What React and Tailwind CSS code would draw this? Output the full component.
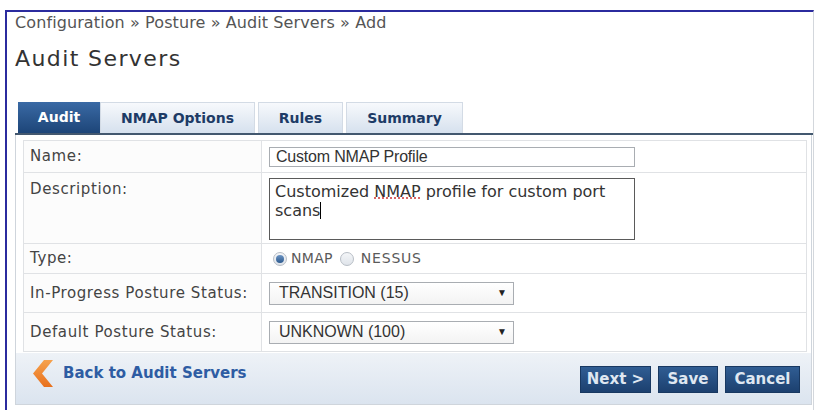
import React from 'react';

// small css radio, drawn like the old browser widget
const Radio = ({ checked }) => (
  <span className="inline-flex w-[14px] h-[14px] rounded-full border border-[#b8bec6] bg-gradient-to-b from-[#f4f6f8] to-[#dfe4ea] items-center justify-center">
    {checked && <span className="w-[8px] h-[8px] rounded-full bg-gradient-to-b from-[#6d95c4] to-[#2c5a8e]" />}
  </span>
);

const Chevron = () => (
  <svg width="21" height="27" viewBox="0 0 21 27">
    <defs>
      <linearGradient id="chev" x1="0" y1="0" x2="0" y2="1">
        <stop offset="0" stopColor="#f6a24e" />
        <stop offset="1" stopColor="#e8701c" />
      </linearGradient>
    </defs>
    <polygon points="12,0 21,0 10,13.5 21,27 12,27 1,13.5" fill="url(#chev)" />
  </svg>
);

const Select = ({ value }) => (
  <div className="w-[245px] h-[23px] border border-[#a9adb2] bg-gradient-to-b from-white to-[#f3f3f3] flex items-center justify-between pl-[9px] pr-[6px] font-['Liberation_Sans',Arial,sans-serif] text-[16px] text-[#333]">
    <span>{value}</span>
    <span className="text-[10px] text-[#222] leading-none">▼</span>
  </div>
);

const TABS = [
  { label: 'Audit', w: 'w-[82px]', active: true },
  { label: 'NMAP Options', w: 'w-[155px]' },
  { label: 'Rules', w: 'w-[85px]' },
  { label: 'Summary', w: 'w-[117px]' },
];

export default function App() {
  return (
    <div className="w-[817px] h-[410px] bg-white overflow-hidden pt-[10px] pl-[5px] font-['DejaVu_Sans',Verdana,sans-serif]">
      <div className="w-[809px] h-[400px] border-t-2 border-l-2 border-[#2b2b9e] border-r border-r-[#d3d7dc] pl-[8px] pt-[3px]">
        {/* breadcrumb + title */}
        <div className="text-[16px] leading-[16px] text-[#555] tracking-[0.1px]">Configuration » Posture » Audit Servers » Add</div>
        <h1 className="mt-[15px] text-[22px] leading-[26px] text-[#333] tracking-[1.4px]">Audit Servers</h1>

        {/* tabs */}
        <div className="mt-[30px] ml-[3px] flex gap-[3px] h-[31px]">
          {TABS.map(t => (
            <div
              key={t.label}
              className={`${t.w} flex items-center justify-center text-[14px] font-bold ${
                t.active
                  ? 'bg-gradient-to-b from-[#3a6aa5] to-[#1d4578] text-white -mr-[3px]'
                  : 'bg-gradient-to-b from-[#f7f9fc] to-[#d6e1ee] text-[#1d3b66] border border-b-0 border-[#d3dbe5]'
              }`}
            >
              {t.label}
            </div>
          ))}
        </div>
        <div className="h-[2px] w-[798px] bg-[#43586f]" />

        {/* panel */}
        <div className="w-[797px] border-l border-r border-b border-[#cfd5dc]">
          <div className="pt-[5px] pl-[7px] pr-[4px]">
            <div className="border border-[#e0e2e5] text-[15px] text-[#444] tracking-[0.6px]">
              <div className="flex h-[32px] border-b border-[#e0e2e5]">
                <div className="w-[238px] border-r border-[#e0e2e5] bg-[#fcfcfc] flex items-center pl-[6px]">Name:</div>
                <div className="flex-1 flex items-center pl-[7px] tracking-normal">
                  <div className="w-[366px] h-[20px] border border-[#a9adb2] flex items-center pl-[6px] font-['Liberation_Sans',Arial,sans-serif] text-[16px] text-[#333] tracking-[-0.2px]">Custom NMAP Profile</div>
                </div>
              </div>
              <div className="flex h-[71px] border-b border-[#e0e2e5]">
                <div className="w-[238px] border-r border-[#e0e2e5] bg-[#fcfcfc] pl-[6px] pt-[5px]">Description:</div>
                <div className="flex-1 pl-[7px] pt-[5px] tracking-normal">
                  <div className="w-[366px] h-[62px] border border-[#5a5a5a] pl-[5px] pt-[3px] text-[16px] leading-[19px] text-[#333]">
                    Customized <span className="underline decoration-dotted decoration-[#d04040]">NMAP</span> profile for custom port
                    <br />
                    scans<span className="inline-block w-px h-[17px] bg-black align-[-3px]" />
                  </div>
                </div>
              </div>
              <div className="flex h-[30px] border-b border-[#e0e2e5]">
                <div className="w-[238px] border-r border-[#e0e2e5] bg-[#fcfcfc] flex items-center pl-[6px]">Type:</div>
                <div className="flex-1 flex items-center pl-[11px] text-[14px] text-[#5a5a5a] tracking-[0.3px]">
                  <Radio checked />
                  <span className="ml-[4px] mr-[7px]">NMAP</span>
                  <Radio />
                  <span className="ml-[7px] tracking-[0.8px]">NESSUS</span>
                </div>
              </div>
              <div className="flex h-[39px] border-b border-[#e0e2e5]">
                <div className="w-[238px] border-r border-[#e0e2e5] bg-[#fcfcfc] flex items-center pl-[6px]">In-Progress Posture Status:</div>
                <div className="flex-1 flex items-center pl-[7px] tracking-normal">
                  <Select value="TRANSITION (15)" />
                </div>
              </div>
              <div className="flex h-[38px]">
                <div className="w-[238px] border-r border-[#e0e2e5] bg-[#fcfcfc] flex items-center pl-[6px]">Default Posture Status:</div>
                <div className="flex-1 flex items-center pl-[7px] tracking-normal">
                  <Select value="UNKNOWN (100)" />
                </div>
              </div>
            </div>
          </div>

          {/* footer bar */}
          <div className="mt-[1px] h-[51px] bg-gradient-to-b from-[#eef2f7] to-[#dbe4ef] flex items-start justify-between pl-[16px] pr-[11px]">
            <div className="flex items-center gap-[10px] mt-[7px]">
              <Chevron />
              <span className="text-[15px] font-bold text-[#2e5ca3]">Back to Audit Servers</span>
            </div>
            <div className="flex gap-[7px] mt-[13px]">
              {[['Next >', 'w-[71px]'], ['Save', 'w-[60px]'], ['Cancel', 'w-[75px]']].map(([b, w]) => (
                <button
                  key={b}
                  className={`${w} h-[27px] bg-gradient-to-b from-[#305d93] to-[#1c406f] border border-[#183861] text-[#dfe7f1] text-[15px] font-bold flex items-center justify-center`}
                >
                  {b}
                </button>
              ))}
            </div>
          </div>
        </div>
      </div>
    </div>
  );
}
